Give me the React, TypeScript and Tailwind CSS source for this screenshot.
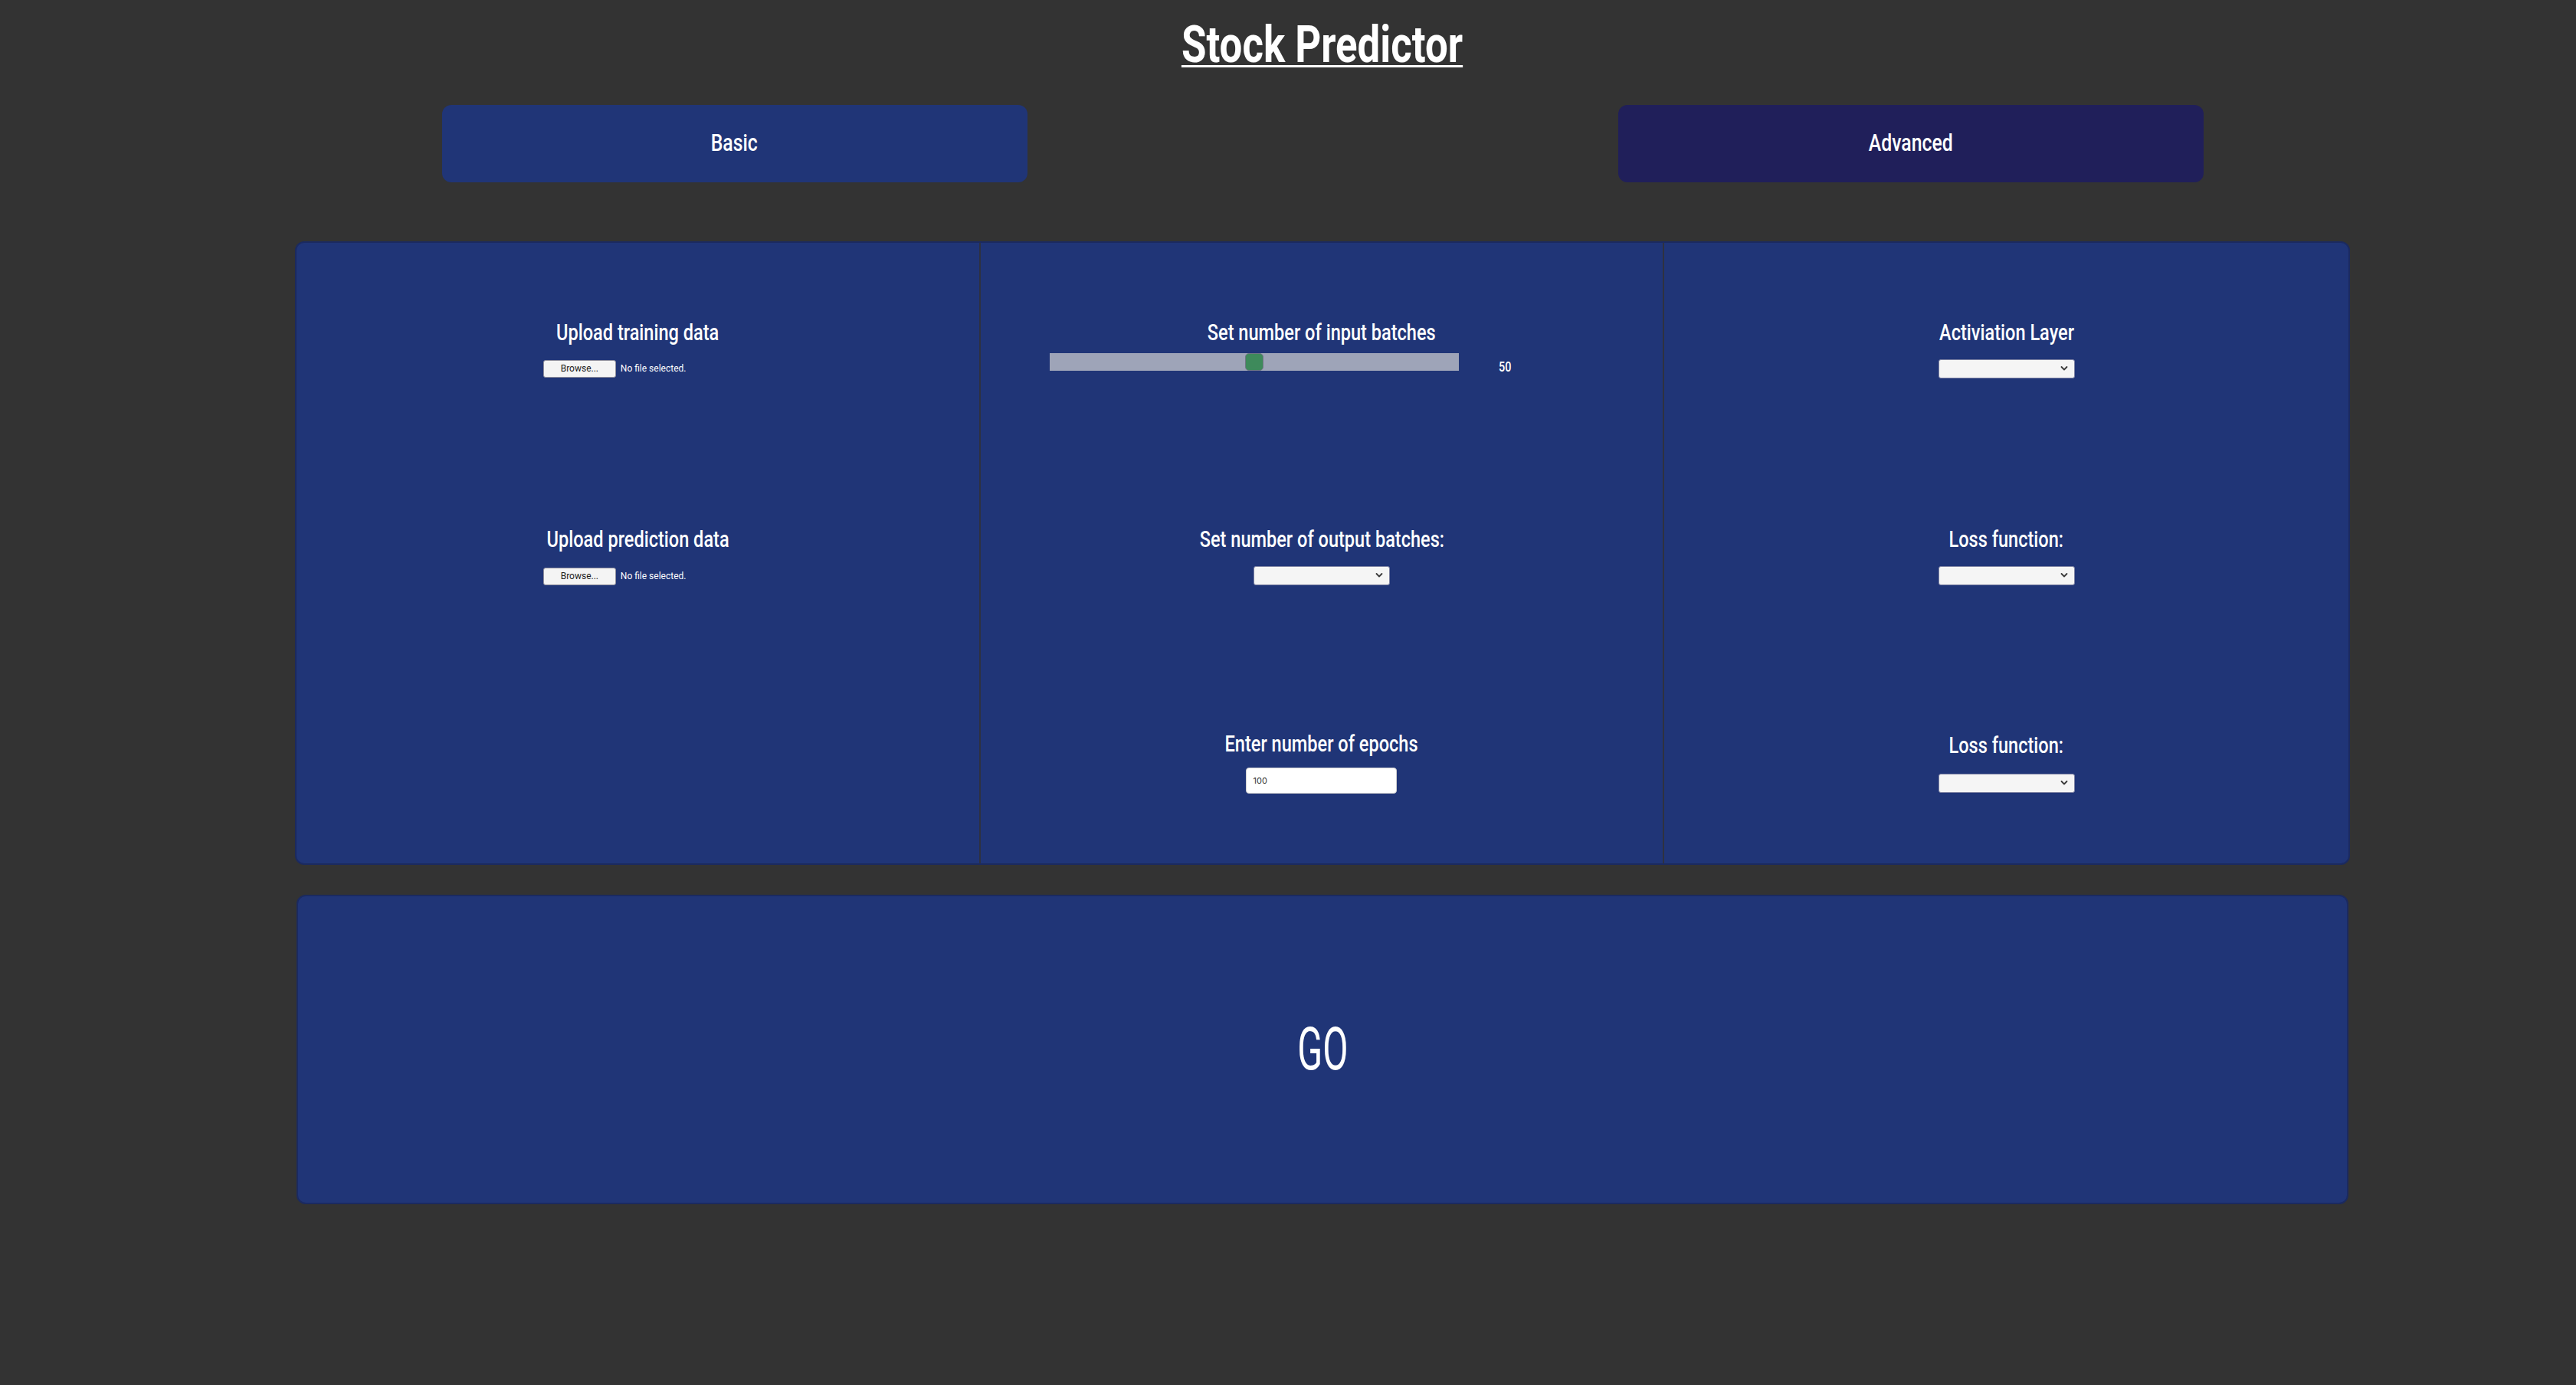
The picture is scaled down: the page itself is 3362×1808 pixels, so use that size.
import React from "react";

function Chevron() {
  return (
    <svg
      width="10"
      height="7"
      viewBox="0 0 10 7"
      fill="none"
      className="pointer-events-none absolute right-[9px] top-1/2 -translate-y-1/2"
    >
      <path d="M1.5 1.5 L5 5 L8.5 1.5" stroke="#3a3a3a" strokeWidth="1.8" strokeLinecap="round" strokeLinejoin="round" />
    </svg>
  );
}

function SelectBox() {
  return (
    <div className="relative w-[178px] h-[25px]">
      <select className="appearance-none w-full h-full bg-[#f5f5f5] border border-[#7d82a3] rounded-[3px] outline-none" />
      <Chevron />
    </div>
  );
}

function FileInput() {
  return (
    <div className="w-[247px] flex items-center">
      <button className="w-[95px] h-[23px] bg-[#f4f4f4] border border-[#8f8f9d] rounded-[3px] text-[12px] leading-[21px] text-[#1c1c1c]">
        Browse...
      </button>
      <span className="ml-[6px] text-[12px] leading-[21px] text-white whitespace-nowrap">No file selected.</span>
    </div>
  );
}

function Label({ children }: { children: React.ReactNode }) {
  return (
    <div className="text-white text-[30px] leading-[34px] font-medium whitespace-nowrap">
      <span className="inline-block scale-x-[0.785]">{children}</span>
    </div>
  );
}

function Cell({ children }: { children?: React.ReactNode }) {
  return <div className="flex flex-col items-center justify-center pt-[6px]">{children}</div>;
}

export default function App() {
  return (
    <div className="min-h-screen bg-[#333333] pl-[90px] pt-[26px] font-['Roboto','Liberation_Sans',sans-serif]">
      <h1 className="text-center text-white font-bold text-[66px] leading-[66px]">
        <span className="inline-block scale-x-[0.8] underline decoration-[3px] underline-offset-[4px]">
          Stock Predictor
        </span>
      </h1>

      <div className="mt-[45px] flex justify-center gap-[771px]">
        <button className="w-[764px] h-[101px] rounded-[12px] bg-[#203577] text-white text-[31px] font-medium">
          <span className="inline-block scale-x-[0.8]">Basic</span>
        </button>
        <button className="w-[764px] h-[101px] rounded-[12px] bg-[#201f5a] text-white text-[31px] font-medium">
          <span className="inline-block scale-x-[0.8]">Advanced</span>
        </button>
      </div>

      <div className="mt-[77px] mx-auto w-[2682px] h-[814px] grid grid-cols-3 bg-[#203577] border-2 border-[#1b2a60] rounded-[12px] overflow-hidden">
        <div className="grid grid-rows-3 h-full border-r-2 border-[#2e3140]">
          <Cell>
            <Label>Upload training data</Label>
            <div className="mt-[19px]">
              <FileInput />
            </div>
          </Cell>
          <Cell>
            <Label>Upload prediction data</Label>
            <div className="mt-[20px]">
              <FileInput />
            </div>
          </Cell>
          <Cell />
        </div>

        <div className="grid grid-rows-3 h-full border-r-2 border-[#2e3140]">
          <Cell>
            <Label>Set number of input batches</Label>
            <div className="mt-[10px] flex items-start w-[710px] h-[32px]">
              <input
                type="range"
                min={0}
                max={100}
                defaultValue={50}
                className="appearance-none w-[534px] h-[23px] bg-[#9ea4b8] outline-none [&::-webkit-slider-thumb]:appearance-none [&::-webkit-slider-thumb]:w-[24px] [&::-webkit-slider-thumb]:h-[23px] [&::-webkit-slider-thumb]:rounded-[5px] [&::-webkit-slider-thumb]:bg-[#3e8a5b] [&::-webkit-slider-thumb]:border [&::-webkit-slider-thumb]:border-[#6f7684]"
              />
              <span className="ml-[52px] mt-[8px] inline-block origin-left scale-x-[0.8] text-white text-[18px] leading-[20px] font-medium">
                50
              </span>
            </div>
          </Cell>
          <Cell>
            <Label>Set number of output batches:</Label>
            <div className="mt-[18px]">
              <SelectBox />
            </div>
          </Cell>
          <Cell>
            <Label>Enter number of epochs</Label>
            <input
              type="text"
              defaultValue="100"
              className="mt-[14px] w-[197px] h-[34px] bg-white border border-[#d0d0d0] rounded-[4px] pl-[8px] text-[11px] text-[#333333] outline-none font-['Inter',sans-serif]"
            />
          </Cell>
        </div>

        <div className="grid grid-rows-3 h-full">
          <Cell>
            <Label>Activiation Layer</Label>
            <div className="mt-[18px]">
              <SelectBox />
            </div>
          </Cell>
          <Cell>
            <Label>Loss function:</Label>
            <div className="mt-[18px]">
              <SelectBox />
            </div>
          </Cell>
          <Cell>
            <Label>Loss function:</Label>
            <div className="mt-[20px]">
              <SelectBox />
            </div>
          </Cell>
        </div>
      </div>

      <div className="mt-[39px] mx-auto w-[2678px] h-[404px] flex items-center justify-center bg-[#203577] border-2 border-[#1b2a60] rounded-[12px]">
        <span className="inline-block scale-x-[0.62] text-white text-[78px] leading-none">GO</span>
      </div>
    </div>
  );
}
